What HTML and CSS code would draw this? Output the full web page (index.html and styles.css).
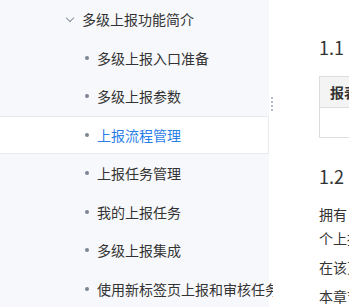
FILE: index.html
```html
<!DOCTYPE html>
<html lang="zh-CN">

<head>
    <meta charset="UTF-8">
    <meta name="viewport" content="width=device-width, initial-scale=1.0">
    <title>多级上报功能简介</title>
    <link rel="stylesheet" href="styles.css">
</head>

<body>
    <div class="layout">
        <!-- Left navigation -->
        <nav class="sidebar">
            <div class="nav-panel">
                <div class="nav-parent">
                    <span class="chevron"></span>
                    <span>多级上报功能简介</span>
                </div>
                <ul class="nav-list">
                    <li class="nav-item">多级上报入口准备</li>
                    <li class="nav-item">多级上报参数</li>
                    <li class="nav-item active">上报流程管理</li>
                    <li class="nav-item">上报任务管理</li>
                    <li class="nav-item">我的上报任务</li>
                    <li class="nav-item">多级上报集成</li>
                    <li class="nav-item">使用新标签页上报和审核任务</li>
                </ul>
            </div>
            <div class="drag-handle">
                <i></i><i></i><i></i><i></i>
            </div>
        </nav>

        <!-- Document content -->
        <main class="content">
            <h1><span class="num">1</span>上报流程管理</h1>
            <h2><span class="num">1.1</span>版本</h2>
            <table class="doc-table">
                <thead>
                    <tr>
                        <th>报表服务器版本</th>
                        <th>插件版本</th>
                    </tr>
                </thead>
                <tbody>
                    <tr>
                        <td></td>
                        <td></td>
                    </tr>
                </tbody>
            </table>
            <h2 class="second"><span class="num">1.2</span>概述</h2>
            <p>拥有&nbsp;&nbsp;多级上报 权限的用户，可以在上报流程管理中新建、编辑、删除上报流程，每<br>个上报流程都可以设置上报的报表以及审核的层级。</p>
            <p>在该页面中可以查看所有的上报流程以及对应的状态。</p>
            <p>本章节将介绍上报流程管理的具体操作。</p>
        </main>
    </div>
</body>

</html>
```

FILE: styles.css
```css
body {
    margin: 0;
    font-family: "Noto Sans CJK SC", "Noto Sans", sans-serif;
    color: #333;
    background-color: #fff;
    overflow: hidden;
}

.layout {
    display: flex;
    height: 307px;
    overflow: hidden;
}

/* Sidebar */
.sidebar {
    position: relative;
    flex: 0 0 273px;
    min-width: 0;
    overflow: hidden;
    font-size: 14px;
}

.nav-panel {
    width: 269px;
    height: 100%;
    background-color: #f7f8fb;
}

.nav-parent {
    display: flex;
    align-items: center;
    height: 38.5px;
    padding-left: 67px;
    color: #333;
}

.chevron {
    width: 5px;
    height: 5px;
    margin: -3px 9px 0 0;
    border-right: 1.2px solid #8a90a0;
    border-bottom: 1.2px solid #8a90a0;
    transform: rotate(45deg);
}

.nav-list {
    list-style: none;
    margin: 0;
    padding: 0;
}

.nav-item {
    display: flex;
    align-items: center;
    height: 38.5px;
    padding-left: 85px;
    white-space: nowrap;
    box-sizing: border-box;
}

.nav-item::before {
    content: "";
    flex: 0 0 4px;
    height: 4px;
    margin-right: 8px;
    border-radius: 50%;
    background-color: #7d8494;
}

.nav-item.active {
    background-color: #fff;
    color: #2a7ee8;
    border-top: 1px solid #e8eaef;
    border-bottom: 1px solid #e8eaef;
    border-right: 1px solid #e8eaef;
}

.drag-handle {
    position: absolute;
    top: 97px;
    left: 271px;
    display: flex;
    flex-direction: column;
    gap: 2px;
}

.drag-handle i {
    width: 2px;
    height: 2px;
    background-color: #b3bccb;
}

/* Content */
.content {
    flex: 0 0 600px;
    padding-left: 46px;
}

.content h1 {
    margin: -28px 0 0;
    font-size: 24px;
    line-height: 32px;
    font-weight: 400;
}

.content h2 {
    margin: 29px 0 0;
    font-size: 18px;
    line-height: 28px;
    font-weight: 400;
}

.num {
    margin-right: 12px;
}

.content h2.second {
    margin-top: 24px;
}

.doc-table {
    margin-top: 15px;
    border-collapse: collapse;
    width: 400px;
    font-size: 14px;
}

.doc-table th,
.doc-table td {
    border: 1px solid #dcdcdc;
    padding: 0 10px;
    text-align: left;
}

.doc-table th {
    height: 30px;
    background-color: #f4f4f4;
    font-weight: 700;
}

.doc-table td {
    height: 29px;
}

.content p {
    margin: 12px 0 5px;
    font-size: 14px;
    line-height: 24px;
    white-space: nowrap;
}

.content p + p {
    margin-top: 0;
}
```
